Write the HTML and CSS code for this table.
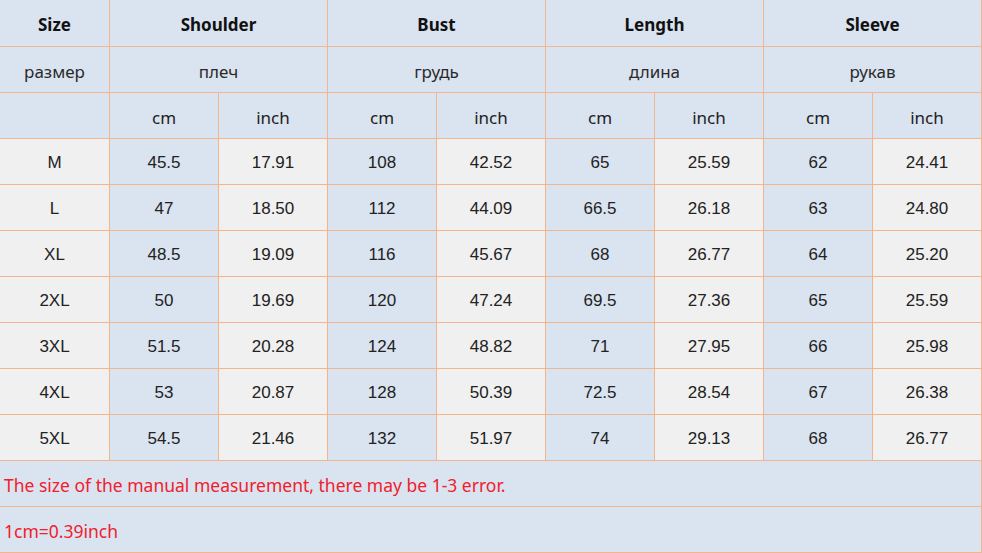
FILE: index.html
```html
<!DOCTYPE html>
<html>
<head>
<meta charset="utf-8">
<link rel="stylesheet" href="styles.css">
</head>
<body>
<div class="grid">
  <div class="c b hd">Size</div>
  <div class="c b hd s2">Shoulder</div>
  <div class="c b hd s2">Bust</div>
  <div class="c b hd s2">Length</div>
  <div class="c b hd s2">Sleeve</div>

  <div class="c b sub">размер</div>
  <div class="c b sub s2">плеч</div>
  <div class="c b sub s2">грудь</div>
  <div class="c b sub s2">длина</div>
  <div class="c b sub s2">рукав</div>

  <div class="c b"></div>
  <div class="c b unit">cm</div><div class="c b unit">inch</div>
  <div class="c b unit">cm</div><div class="c b unit">inch</div>
  <div class="c b unit">cm</div><div class="c b unit">inch</div>
  <div class="c b unit">cm</div><div class="c b unit">inch</div>

  <div class="c g">M</div><div class="c b">45.5</div><div class="c g">17.91</div><div class="c b">108</div><div class="c g">42.52</div><div class="c b">65</div><div class="c g">25.59</div><div class="c b">62</div><div class="c g">24.41</div>
  <div class="c g">L</div><div class="c b">47</div><div class="c g">18.50</div><div class="c b">112</div><div class="c g">44.09</div><div class="c b">66.5</div><div class="c g">26.18</div><div class="c b">63</div><div class="c g">24.80</div>
  <div class="c g">XL</div><div class="c b">48.5</div><div class="c g">19.09</div><div class="c b">116</div><div class="c g">45.67</div><div class="c b">68</div><div class="c g">26.77</div><div class="c b">64</div><div class="c g">25.20</div>
  <div class="c g">2XL</div><div class="c b">50</div><div class="c g">19.69</div><div class="c b">120</div><div class="c g">47.24</div><div class="c b">69.5</div><div class="c g">27.36</div><div class="c b">65</div><div class="c g">25.59</div>
  <div class="c g">3XL</div><div class="c b">51.5</div><div class="c g">20.28</div><div class="c b">124</div><div class="c g">48.82</div><div class="c b">71</div><div class="c g">27.95</div><div class="c b">66</div><div class="c g">25.98</div>
  <div class="c g">4XL</div><div class="c b">53</div><div class="c g">20.87</div><div class="c b">128</div><div class="c g">50.39</div><div class="c b">72.5</div><div class="c g">28.54</div><div class="c b">67</div><div class="c g">26.38</div>
  <div class="c g">5XL</div><div class="c b">54.5</div><div class="c g">21.46</div><div class="c b">132</div><div class="c g">51.97</div><div class="c b">74</div><div class="c g">29.13</div><div class="c b">68</div><div class="c g">26.77</div>

  <div class="c b note">The size of the manual measurement, there may be 1-3 error.</div>
  <div class="c b note">1cm=0.39inch</div>
</div>
</body>
</html>
```

FILE: styles.css
```css
html, body {
  margin: 0;
  padding: 0;
  background: #ffffff;
}
.grid {
  display: grid;
  grid-template-columns: 109px repeat(8, 108px);
  grid-template-rows: 46px repeat(11, 45px);
  gap: 1px;
  padding: 0 1px 1px 0;
  width: 982px;
  box-sizing: border-box;
  background: #f3b58e;
  font-family: "Liberation Sans", Arial, sans-serif;
  font-size: 17px;
  color: #222222;
}
.c {
  display: flex;
  align-items: center;
  justify-content: center;
  padding-top: 3px;
  box-sizing: border-box;
}
.b { background: #dae3f0; }
.g { background: #f0f0f0; }
.s2 { grid-column: span 2; }
.hd {
  font-family: "Noto Sans", "Open Sans", sans-serif;
  font-weight: 700;
  font-size: 17px;
  color: #111111;
}
.sub {
  font-family: "Noto Sans", "Open Sans", sans-serif;
  font-size: 17px;
  color: #2a2a2a;
}
.unit {
  font-family: "Noto Sans", "Open Sans", sans-serif;
  font-size: 17px;
}
.note {
  grid-column: 1 / -1;
  justify-content: flex-start;
  padding-left: 4px;
  font-family: "Noto Sans", "Open Sans", sans-serif;
  font-size: 17.5px;
  color: #f0202c;
}
```
